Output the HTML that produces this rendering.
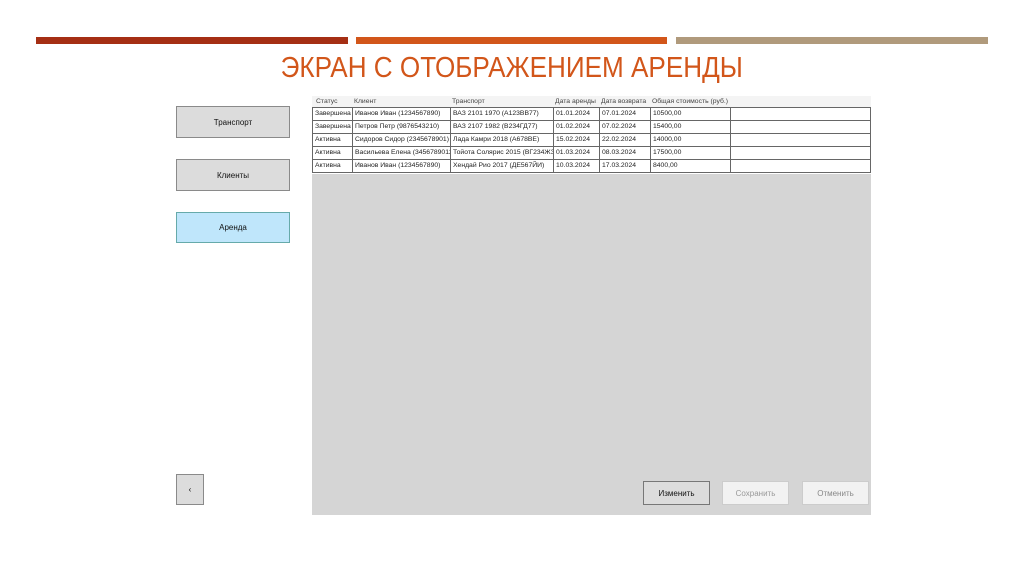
<!DOCTYPE html>
<html><head><meta charset="utf-8"><style>
body{margin:0;width:1024px;height:574px;background:#fff;position:relative;overflow:hidden;font-family:"Liberation Sans",sans-serif}
.a{position:absolute}
.bar{position:absolute;top:37px;height:7px}
.btn{position:absolute;box-sizing:border-box;border:1px solid #8a8a8a;background:#dcdcdc;font-size:8px;display:flex;align-items:center;justify-content:center;color:#111}
.c{position:absolute;box-sizing:border-box;font-size:6.8px;line-height:12px;padding-left:2px;white-space:nowrap;overflow:hidden;color:#222}
.h{color:#444;background:#f4f4f4;height:12px;top:96px}
.r{border-left:1px solid #666;border-bottom:1px solid #666;height:13px}
</style></head><body>
<div class="bar" style="left:36px;width:312px;background:#a52f14"></div>
<div class="bar" style="left:356px;width:311px;background:#d2561a"></div>
<div class="bar" style="left:676px;width:312px;background:#b09a7c"></div>
<div class="a" style="left:0;width:1024px;top:52px;text-align:center;color:#d2561a;font-size:29px;"><span style="display:inline-block;transform:scaleX(0.9)">ЭКРАН С ОТОБРАЖЕНИЕМ АРЕНДЫ</span></div>
<div class="btn" style="left:176px;top:106px;width:114px;height:32px">Транспорт</div>
<div class="btn" style="left:176px;top:159px;width:114px;height:32px">Клиенты</div>
<div class="btn" style="left:176px;top:212px;width:114px;height:31px;background:#bfe6fb;border-color:#6aa">Аренда</div>
<div class="btn" style="left:176px;top:474px;width:28px;height:31px">‹</div>
<div class="a" style="left:312px;top:96px;width:559px;height:419px;background:#d5d5d5"></div>
<div class="a" style="left:312px;top:96px;width:559px;height:78px;background:#fff"></div>
<div class="a" style="left:312px;top:96px;width:559px;height:12px;background:#f4f4f4"></div>
<div class="c h" style="left:314px;width:38px">Статус</div>
<div class="c h" style="left:352px;width:98px">Клиент</div>
<div class="c h" style="left:450px;width:103px">Транспорт</div>
<div class="c h" style="left:553px;width:46px">Дата аренды</div>
<div class="c h" style="left:599px;width:51px">Дата возврата</div>
<div class="c h" style="left:650px;width:90px">Общая стоимость (руб.)</div>
<div id="rows"></div>
<script>
var d=[["Завершена","Иванов Иван (1234567890)","ВАЗ 2101 1970 (А123ВВ77)","01.01.2024","07.01.2024","10500,00"],
["Завершена","Петров Петр (9876543210)","ВАЗ 2107 1982 (В234ГД77)","01.02.2024","07.02.2024","15400,00"],
["Активна","Сидоров Сидор (2345678901)","Лада Камри 2018 (А678ВЕ)","15.02.2024","22.02.2024","14000,00"],
["Активна","Васильева Елена (3456789012)","Тойота Солярис 2015 (ВГ234ЖЗ)","01.03.2024","08.03.2024","17500,00"],
["Активна","Иванов Иван (1234567890)","Хендай Рио 2017 (ДЕ567ЙИ)","10.03.2024","17.03.2024","8400,00"]];
var x=[312,352,450,553,599,650,730,871],h='';
d.forEach(function(r,i){var y=108+i*13;h+='<div class="a" style="left:312px;top:'+(y-1)+'px;width:559px;height:1px;background:#666"></div>';
for(var j=0;j<7;j++)h+='<div class="c r" style="left:'+x[j]+'px;top:'+y+'px;width:'+(x[j+1]-x[j]+(j==6?0:0))+'px;'+(j==6?'border-right:1px solid #666;':'')+'">'+(r[j]||'')+'</div>';});
document.getElementById('rows').innerHTML=h;
</script>
<div class="btn" style="left:643px;top:481px;width:67px;height:24px;border-color:#777">Изменить</div>
<div class="btn" style="left:722px;top:481px;width:67px;height:24px;background:#f2f2f2;border-color:#ccc;color:#999">Сохранить</div>
<div class="btn" style="left:802px;top:481px;width:67px;height:24px;background:#f2f2f2;border-color:#ccc;color:#888">Отменить</div>
</body></html>
